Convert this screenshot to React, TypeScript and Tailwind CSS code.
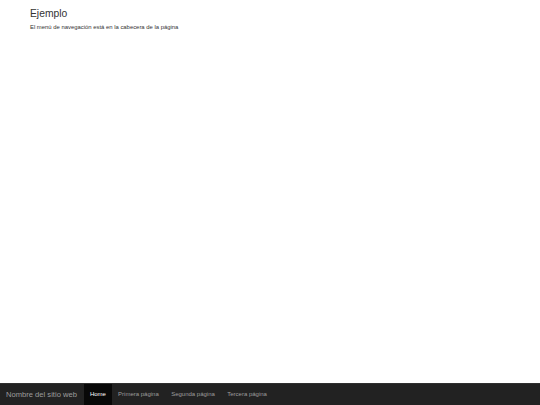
export default function App() {
  const links = ['Primera página', 'Segunda página', 'Tercera página'];

  return (
    <div className="flex flex-col h-[405px] bg-white text-[#333]" style={{ fontFamily: '"Liberation Sans", Arial, sans-serif' }}>
      <div className="flex-1 px-[30px] pt-[7px]">
        <h1 className="text-[10.3px] leading-[14px] font-normal">Ejemplo</h1>
        <p className="text-[5.9px] leading-[9px] mt-[2px]">El menú de navegación está en la cabecera de la página</p>
      </div>

      <nav className="h-[22px] bg-[#222] border-t border-[#303030] flex items-stretch">
        <span className="pl-[6px] pr-[7px] flex items-center text-[7.6px] text-[#9d9d9d]">Nombre del sitio web</span>
        <ul className="flex items-stretch">
          <li className="bg-[#080808] text-white text-[6px] px-[6px] flex items-center">Home</li>
          {links.map((l) => (
            <li key={l} className="text-[#9d9d9d] text-[6px] px-[6.2px] flex items-center">{l}</li>
          ))}
        </ul>
      </nav>
    </div>
  );
}
